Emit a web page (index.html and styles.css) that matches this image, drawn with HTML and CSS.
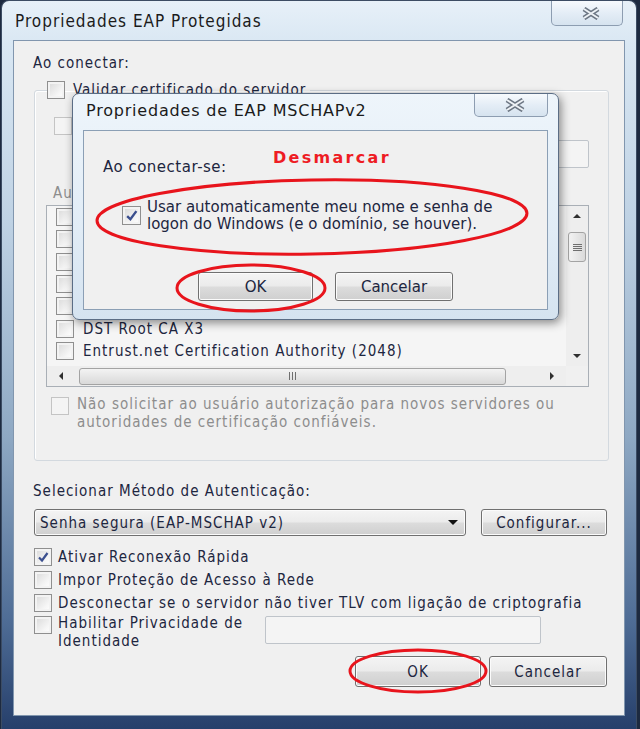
FILE: index.html
```html
<!DOCTYPE html>
<html lang="pt-BR">
<head>
  <meta charset="UTF-8">
  <meta name="viewport" content="width=device-width, initial-scale=1.0">
  <title>Propriedades EAP Protegidas</title>
  <link rel="stylesheet" href="styles.css">
</head>
<body>
<div class="page">

  <!-- Main window -->
  <div class="window">
    <div class="titlebar">
      <span class="title">Propriedades EAP Protegidas</span>
      <span class="close-btn">
        <svg width="20" height="13" viewBox="0 0 20 13"><path class="x-out" d="M3 2 L17 11 M17 2 L3 11"/><path class="x-in" d="M3 2 L17 11 M17 2 L3 11"/></svg>
      </span>
    </div>

    <div class="client">
      <div class="label">Ao conectar:</div>

      <fieldset class="group">
        <legend><span class="check-row"><span class="cb"></span>Validar certificado do servidor</span></legend>

        <div class="check-row servers-row"><span class="cb off"></span><span class="dim">Conectar a estes servidores:</span></div>
        <div class="textbox servers"></div>

        <div class="label dim ca-label">Autoridades de Certificação Raiz Confiáveis:</div>

        <div class="listbox">
          <div class="items">
            <div class="item"><span class="cb"></span>AddTrust External CA Root</div>
            <div class="item"><span class="cb"></span>Baltimore CyberTrust Root</div>
            <div class="item"><span class="cb"></span>Class 3 Public Primary Certification Authority</div>
            <div class="item"><span class="cb"></span>DigiCert Assured ID Root CA</div>
            <div class="item"><span class="cb"></span>DigiCert High Assurance EV Root CA</div>
            <div class="item"><span class="cb"></span>DST Root CA X3</div>
            <div class="item"><span class="cb"></span>Entrust.net Certification Authority (2048)</div>
          </div>
          <div class="vscroll">
            <span class="arrow up"></span>
            <span class="vthumb"><i></i></span>
            <span class="arrow down"></span>
          </div>
          <div class="hscroll">
            <span class="arrow left"></span>
            <span class="hthumb"><i></i></span>
            <span class="arrow right"></span>
          </div>
          <div class="corner"></div>
        </div>

        <div class="check-row multi prompt-row">
          <span class="cb off"></span>
          <span class="dim">Não solicitar ao usuário autorização para novos servidores ou<br>autoridades de certificação confiáveis.</span>
        </div>
      </fieldset>

      <div class="label method-label">Selecionar Método de Autenticação:</div>
      <div class="method-row">
        <div class="select">Senha segura (EAP-MSCHAP v2)<span class="drop"></span></div>
        <div class="btn config">Configurar...</div>
      </div>

      <div class="check-row opt first"><span class="cb on"><svg width="12" height="12" viewBox="0 0 12 12"><path d="M2 6.5 L5 9.5 L10.5 2"/></svg></span>Ativar Reconexão Rápida</div>
      <div class="check-row opt"><span class="cb"></span>Impor Proteção de Acesso à Rede</div>
      <div class="check-row opt"><span class="cb"></span>Desconectar se o servidor não tiver TLV com ligação de criptografia</div>
      <div class="check-row multi identity-row">
        <span class="cb"></span>
        <span class="identity-text">Habilitar Privacidade de<br>Identidade</span>
        <div class="textbox identity"></div>
      </div>

      <div class="buttons">
        <div class="btn ok">OK</div>
        <div class="btn cancel">Cancelar</div>
      </div>
    </div>
  </div>

  <!-- MSCHAPv2 dialog on top -->
  <div class="dialog">
    <div class="dialog-titlebar">
      <span class="dialog-title">Propriedades de EAP MSCHAPv2</span>
      <span class="close-btn small">
        <svg width="22" height="14" viewBox="0 0 22 14"><path class="x-out" d="M3 2 L19 12 M19 2 L3 12"/><path class="x-in" d="M3 2 L19 12 M19 2 L3 12"/></svg>
      </span>
    </div>
    <div class="dialog-client">
      <div class="dialog-label">Ao conectar-se:</div>
      <div class="dialog-check">
        <span class="cb on big"><svg width="13" height="13" viewBox="0 0 12 12"><path d="M2 6.5 L5 9.5 L10.5 2"/></svg></span>
        <span>Usar automaticamente meu nome e senha de<br>logon do Windows (e o domínio, se houver).</span>
      </div>
      <div class="dialog-buttons">
        <div class="btn ok">OK</div>
        <div class="btn cancel">Cancelar</div>
      </div>
    </div>
  </div>

  <!-- Red annotations -->
  <svg class="marks" width="640" height="729" viewBox="0 0 640 729">
    <ellipse cx="312" cy="217" rx="215" ry="37" transform="rotate(-1 312 217)"/>
    <ellipse cx="251" cy="288" rx="74" ry="23"/>
    <ellipse cx="418" cy="671" rx="68" ry="21"/>
  </svg>
  <span class="note">Desmarcar</span>

</div>
</body>
</html>
```

FILE: styles.css
```css
/* General */
* {
  box-sizing: border-box;
}

body {
  margin: 0;
  background-color: #1d2a40;
  font-family: "DejaVu Sans Condensed", "DejaVu Sans", sans-serif;
  font-size: 15px;
  letter-spacing: 1px;
  color: #1d2640;
}

.page {
  position: relative;
  width: 640px;
  height: 729px;
  overflow: hidden;
}

/* Main window frame */
.window {
  width: 636px;
  height: 729px;
  margin-left: 1px;
  padding: 0 11px 13px 11px;
  border: 1px solid #3c4c63;
  border-bottom: none;
  border-radius: 8px 8px 0 0;
  background: linear-gradient(180deg, #e7f0f8 0%, #d9e7f3 6%, #bfd2e4 30%, #8ea8c3 60%, #4f6d96 85%, #263f6b 100%);
}

.titlebar {
  display: flex;
  align-items: flex-start;
  height: 39px;
}

.title {
  margin: 10px 0 0 2px;
  font-size: 17px;
  line-height: 20px;
  color: #1b1b1b;
}

.close-btn {
  display: flex;
  align-items: center;
  justify-content: center;
  width: 72px;
  height: 25px;
  margin: 0 2px 0 auto;
  border: 1px solid #8d9db1;
  border-top: none;
  border-radius: 0 0 5px 5px;
  background: linear-gradient(180deg, #f7fafd 0%, #e4edf6 50%, #d6e3ef 100%);
}

.close-btn svg {
  margin-left: 8px;
}

.close-btn .x-out {
  stroke: #6c7683;
  stroke-width: 5;
  fill: none;
}

.close-btn .x-in {
  stroke: #eef2f6;
  stroke-width: 2;
  fill: none;
}

.client {
  height: 676px;
  padding: 12px 15px 0 19px;
  border: 1px solid #8196ae;
  background-color: #f0f0f0;
}

.label {
  line-height: 20px;
}

.dim {
  color: #8d8d8d;
}

/* Checkboxes */
.check-row {
  display: flex;
  align-items: center;
  gap: 8px;
  line-height: 20px;
}

.cb {
  display: inline-flex;
  align-items: center;
  justify-content: center;
  flex-shrink: 0;
  width: 18px;
  height: 18px;
  border: 1px solid #8f8f8f;
  background: linear-gradient(135deg, #d8d8d8 0%, #f6f6f6 70%, #ffffff 100%);
  box-shadow: inset 0 0 0 2px #f3f3f3;
}

.cb.off {
  border-color: #c4c4c4;
  background: #f4f4f4;
  box-shadow: none;
}

.cb.on path {
  fill: none;
  stroke: #3b4f8e;
  stroke-width: 2.2;
}

.cb.big {
  width: 19px;
  height: 19px;
}

/* Group box */
.group {
  margin: 7px 0 0 1px;
  padding: 0 19px 29px 12px;
  border: 1px solid #d3d9df;
  border-radius: 3px;
  box-shadow: inset 1px 1px 0 #ffffff;
}

.group legend {
  padding: 0 4px 0 0;
}

.servers-row {
  margin: 16px 0 0 7px;
}

.textbox {
  height: 28px;
  border: 1px solid #bfc4ca;
  border-radius: 2px;
  background-color: #f4f4f4;
}

.servers {
  margin: 4px 0 0 26px;
}

.ca-label {
  margin: 15px 0 0 6px;
}

/* Certificate list */
.listbox {
  display: grid;
  grid-template-columns: 1fr 22px;
  grid-template-rows: 1fr 20px;
  width: 543px;
  height: 182px;
  margin: 2px 0 0 -1px;
  border: 1px solid #a9afb6;
  background-color: #f5f5f5;
}

.items {
  overflow: hidden;
}

.item {
  display: flex;
  align-items: center;
  gap: 9px;
  height: 22.3px;
  padding-left: 9px;
  white-space: nowrap;
}

.vscroll {
  display: flex;
  flex-direction: column;
  background-color: #eeeeee;
}

.hscroll {
  display: flex;
  align-items: center;
  background-color: #eeeeee;
}

.corner {
  background-color: #f0f0f0;
}

.arrow {
  display: flex;
  align-items: center;
  justify-content: center;
  flex-shrink: 0;
}

.arrow::before {
  content: "";
  border: 4px solid transparent;
}

.arrow.up,
.arrow.down {
  height: 20px;
}

.arrow.down {
  margin-top: auto;
}

.arrow.up::before {
  border-top: none;
  border-bottom-color: #2f2f2f;
}

.arrow.down::before {
  border-bottom: none;
  border-top-color: #2f2f2f;
}

.arrow.left,
.arrow.right {
  width: 28px;
  height: 20px;
}

.arrow.right {
  margin-left: auto;
}

.arrow.left::before {
  border-left: none;
  border-right-color: #2f2f2f;
}

.arrow.right::before {
  border-right: none;
  border-left-color: #2f2f2f;
}

.vthumb,
.hthumb {
  display: flex;
  align-items: center;
  justify-content: center;
  border: 1px solid #a3a3a3;
  border-radius: 3px;
}

.vthumb {
  height: 30px;
  margin: 6px 2px 0;
  background: linear-gradient(90deg, #f3f3f3, #dadada);
}

.vthumb i {
  width: 9px;
  height: 7px;
  background: repeating-linear-gradient(180deg, #6f6f6f 0 1px, transparent 1px 2px);
}

.hthumb {
  width: 427px;
  height: 17px;
  margin-left: 4px;
  background: linear-gradient(180deg, #f3f3f3, #d9d9d9);
}

.hthumb i {
  width: 7px;
  height: 8px;
  background: repeating-linear-gradient(90deg, #6f6f6f 0 1px, transparent 1px 3px);
}

.prompt-row {
  margin: 9px 0 0 4px;
}

.multi {
  align-items: flex-start;
  line-height: 17.5px;
}

.multi .cb {
  margin-top: 1px;
}

/* Authentication method */
.method-label {
  margin-top: 20px;
}

.method-row {
  display: flex;
  justify-content: space-between;
  margin: 8px 2px 0 1px;
}

.btn,
.select {
  display: flex;
  align-items: center;
  height: 27px;
  border: 1px solid #707070;
  border-radius: 3px;
  background: linear-gradient(180deg, #f4f4f4 0%, #ebebeb 48%, #dcdcdc 52%, #cfcfcf 100%);
  box-shadow: inset 0 0 0 1px #fbfbfb;
}

.select {
  position: relative;
  width: 432px;
  padding-left: 5px;
}

.drop {
  position: absolute;
  right: 7px;
  top: 10px;
  border: 5px solid transparent;
  border-bottom: none;
  border-top-color: #111111;
}

.btn {
  justify-content: center;
}

.config {
  width: 126px;
}

.opt {
  height: 23px;
  margin-left: 1px;
  gap: 6px;
}

.opt.first {
  margin-top: 9px;
}

.identity-row {
  margin: 1px 0 0 1px;
  gap: 6px;
}

.identity-text {
  width: 201px;
}

.identity {
  width: 276px;
  margin-top: 1px;
}

.buttons {
  display: flex;
  justify-content: flex-end;
  gap: 8px;
  margin: 6px 2px 0 0;
}

.buttons .btn {
  height: 31px;
}

.buttons .ok {
  width: 126px;
}

.buttons .cancel {
  width: 118px;
}

/* MSCHAPv2 dialog */
.dialog {
  position: absolute;
  left: 72px;
  top: 93px;
  width: 487px;
  height: 227px;
  padding: 0 10px 9px 10px;
  border: 1px solid #5b6d85;
  border-radius: 7px;
  background: linear-gradient(180deg, #eef5fb 0%, #e1ecf6 60%, #d5e3f0 100%);
  box-shadow: 2px 3px 10px rgba(0, 0, 0, 0.45);
  font-family: "DejaVu Sans", sans-serif;
  font-size: 15px;
  letter-spacing: 0;
}

.dialog-titlebar {
  display: flex;
  align-items: flex-start;
  height: 36px;
}

.dialog-title {
  margin: 7px 0 0 3px;
  font-size: 16px;
  letter-spacing: 0.8px;
  line-height: 20px;
  color: #1b1b1b;
}

.close-btn.small {
  width: 74px;
  height: 23px;
  margin-right: 0;
}

.dialog-client {
  height: 180px;
  padding: 26px 0 0 19px;
  border: 1px solid #8b9fb5;
  background-color: #f0f0f0;
}

.dialog-label {
  line-height: 20px;
  letter-spacing: 0.5px;
}

.dialog-check {
  display: flex;
  align-items: flex-start;
  gap: 6px;
  margin: 22px 0 0 19px;
  line-height: 17px;
}

.dialog-check .cb {
  margin-top: 7px;
}

.dialog-buttons {
  display: flex;
  justify-content: flex-end;
  gap: 22px;
  margin: 39px 94px 0 0;
}

.dialog-buttons .btn {
  height: 29px;
}

.dialog-buttons .ok {
  width: 115px;
}

.dialog-buttons .cancel {
  width: 118px;
}

/* Red annotations */
.marks {
  position: absolute;
  left: 0;
  top: 0;
  pointer-events: none;
}

.marks ellipse {
  fill: none;
  stroke: #e8141c;
  stroke-width: 3;
}

.note {
  position: absolute;
  left: 273px;
  top: 147px;
  font-family: "DejaVu Sans", sans-serif;
  font-size: 16px;
  font-weight: bold;
  letter-spacing: 2.3px;
  line-height: 22px;
  color: #ee1c24;
}
```
